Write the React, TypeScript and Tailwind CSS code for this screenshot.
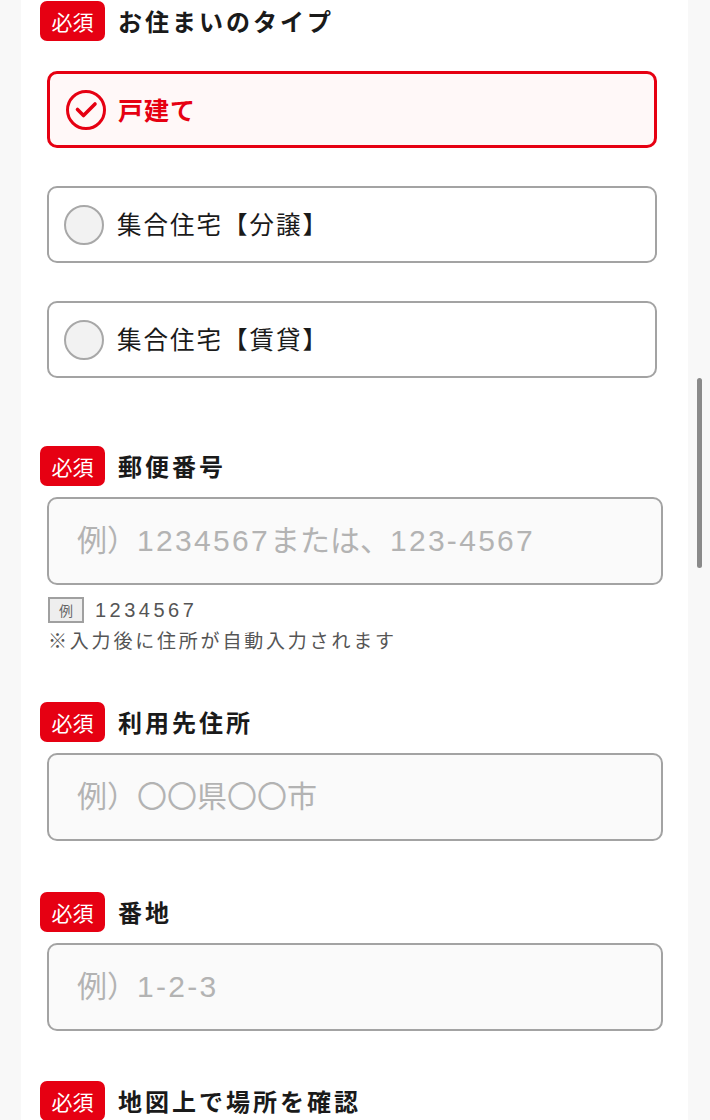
import React from "react";

const FONT = { fontFamily: '"Noto Sans CJK JP", "Noto Sans", sans-serif' };
const LATIN_FIRST = { fontFamily: '"Liberation Sans", "Noto Sans CJK JP", sans-serif' };

function Header({ title }: { title: string }) {
  return (
    <div className="flex h-10 items-center">
      <span className="flex h-10 w-[65px] items-center justify-center rounded-[7px] bg-[#e60012] text-[21px] font-normal leading-none text-white">
        必須
      </span>
      <span className="ml-[13px] text-[24px] font-bold leading-none tracking-[3px] text-[#1a1a1a]">
        {title}
      </span>
    </div>
  );
}

function Option({ label, selected }: { label: string; selected?: boolean }) {
  if (selected) {
    return (
      <div className="ml-[7px] flex h-[77px] w-[610px] items-center rounded-[10px] border-[3px] border-[#e60012] bg-[#fff8f8] pl-[15px]">
        <svg width="42" height="42" viewBox="0 0 42 42" className="shrink-0">
          <circle cx="21" cy="21" r="18.5" fill="none" stroke="#e60012" strokeWidth="3" />
          <path d="M12.5 20.5 L18.5 26.5 L30 15" fill="none" stroke="#e60012" strokeWidth="3.6" strokeLinecap="round" strokeLinejoin="round" />
        </svg>
        <span className="ml-[11px] text-[25px] font-bold leading-none tracking-[1px] text-[#e60012]">{label}</span>
      </div>
    );
  }
  return (
    <div className="ml-[7px] flex h-[77px] w-[610px] items-center rounded-[10px] border-2 border-[#a3a3a3] bg-white pl-[15px]">
      <span className="h-10 w-10 shrink-0 rounded-full border-2 border-[#a8a8a8] bg-[#f2f2f2]" />
      <span className="ml-[13px] text-[24.5px] font-normal leading-none tracking-[2px] text-[#1a1a1a]">{label}</span>
    </div>
  );
}

function Input({ children }: { children: React.ReactNode }) {
  return (
    <div className="ml-[7px] flex h-[88px] w-[616px] items-center rounded-[10px] border-2 border-[#a3a3a3] bg-[#fafafa] pl-[28px]">
      <span className="text-[30px] font-normal leading-none text-[#b3b3b3]" style={LATIN_FIRST}>
        {children}
      </span>
    </div>
  );
}

function Num({ children }: { children: React.ReactNode }) {
  return <span className="tracking-[2.3px]">{children}</span>;
}

export default function App() {
  return (
    <div className="flex h-[1120px] w-[710px] overflow-hidden bg-[#f8f8f8]" style={FONT}>
      <div className="w-[21px] shrink-0" />
      <div className="flex w-[667px] shrink-0 flex-col bg-white pl-[19px] pt-[1px]">
        <Header title="お住まいのタイプ" />
        <div className="mt-[30px] flex flex-col gap-[38px]">
          <Option label="戸建て" selected />
          <Option label="集合住宅【分譲】" />
          <Option label="集合住宅【賃貸】" />
        </div>

        <div className="mt-[68px]">
          <Header title="郵便番号" />
        </div>
        <div className="mt-[11px]">
          <Input>
            例）<Num>1234567</Num>または、<Num>123-4567</Num>
          </Input>
        </div>
        <div className="ml-[8px] mt-[12px] flex items-center">
          <span className="flex h-[26px] w-[36px] items-center justify-center border-2 border-[#a0a0a0] bg-[#eeeeee] text-[14px] leading-none text-[#666]">
            例
          </span>
          <span className="ml-[11px] text-[20px] leading-none tracking-[3.5px] text-[#555]" style={LATIN_FIRST}>
            1234567
          </span>
        </div>
        <div className="ml-[8px] mt-[5px] text-[19px] leading-[24px] tracking-[2.8px] text-[#555]">
          ※入力後に住所が自動入力されます
        </div>

        <div className="mt-[50px]">
          <Header title="利用先住所" />
        </div>
        <div className="mt-[11px]">
          <Input>例）〇〇県〇〇市</Input>
        </div>

        <div className="mt-[51px]">
          <Header title="番地" />
        </div>
        <div className="mt-[11px]">
          <Input>
            例）<Num>1-2-3</Num>
          </Input>
        </div>

        <div className="mt-[50px]">
          <Header title="地図上で場所を確認" />
        </div>
      </div>
      <div className="flex w-[22px] shrink-0 justify-center pl-[1px] pt-[378px]">
        <div className="h-[190px] w-[5px] rounded-full bg-[#8a8a8a]" />
      </div>
    </div>
  );
}
